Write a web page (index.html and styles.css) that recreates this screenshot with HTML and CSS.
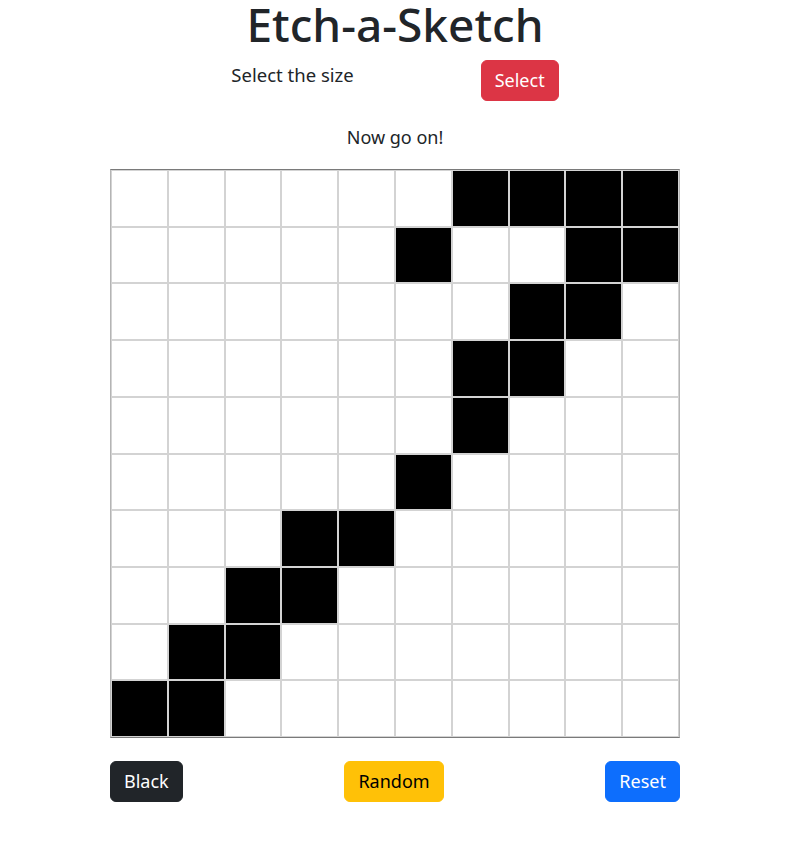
FILE: index.html
```html
<!DOCTYPE html>
<html lang="en">
<head>
<meta charset="utf-8">
<title>Etch-a-Sketch</title>
<link rel="stylesheet" href="styles.css">
</head>
<body>
<main class="page">
  <h1 class="title">Etch-a-Sketch</h1>
  <div class="size-row">
    <span class="size-label">Select the size</span>
    <button class="btn btn-danger">Select</button>
  </div>
  <p class="hint">Now go on!</p>
  <div class="board">
    <div class="cell"></div><div class="cell"></div><div class="cell"></div><div class="cell"></div><div class="cell"></div><div class="cell"></div><div class="cell on"></div><div class="cell on"></div><div class="cell on"></div><div class="cell on"></div>
    <div class="cell"></div><div class="cell"></div><div class="cell"></div><div class="cell"></div><div class="cell"></div><div class="cell on"></div><div class="cell"></div><div class="cell"></div><div class="cell on"></div><div class="cell on"></div>
    <div class="cell"></div><div class="cell"></div><div class="cell"></div><div class="cell"></div><div class="cell"></div><div class="cell"></div><div class="cell"></div><div class="cell on"></div><div class="cell on"></div><div class="cell"></div>
    <div class="cell"></div><div class="cell"></div><div class="cell"></div><div class="cell"></div><div class="cell"></div><div class="cell"></div><div class="cell on"></div><div class="cell on"></div><div class="cell"></div><div class="cell"></div>
    <div class="cell"></div><div class="cell"></div><div class="cell"></div><div class="cell"></div><div class="cell"></div><div class="cell"></div><div class="cell on"></div><div class="cell"></div><div class="cell"></div><div class="cell"></div>
    <div class="cell"></div><div class="cell"></div><div class="cell"></div><div class="cell"></div><div class="cell"></div><div class="cell on"></div><div class="cell"></div><div class="cell"></div><div class="cell"></div><div class="cell"></div>
    <div class="cell"></div><div class="cell"></div><div class="cell"></div><div class="cell on"></div><div class="cell on"></div><div class="cell"></div><div class="cell"></div><div class="cell"></div><div class="cell"></div><div class="cell"></div>
    <div class="cell"></div><div class="cell"></div><div class="cell on"></div><div class="cell on"></div><div class="cell"></div><div class="cell"></div><div class="cell"></div><div class="cell"></div><div class="cell"></div><div class="cell"></div>
    <div class="cell"></div><div class="cell on"></div><div class="cell on"></div><div class="cell"></div><div class="cell"></div><div class="cell"></div><div class="cell"></div><div class="cell"></div><div class="cell"></div><div class="cell"></div>
    <div class="cell on"></div><div class="cell on"></div><div class="cell"></div><div class="cell"></div><div class="cell"></div><div class="cell"></div><div class="cell"></div><div class="cell"></div><div class="cell"></div><div class="cell"></div>
  </div>
  <div class="controls">
    <button class="btn btn-dark">Black</button>
    <button class="btn btn-warning">Random</button>
    <button class="btn btn-primary">Reset</button>
  </div>
</main>
</body>
</html>
```

FILE: styles.css
```css
* { box-sizing: border-box; }
html, body { margin: 0; padding: 0; background: #fff; }
body {
  padding-right: 18px;
  font-family: "Noto Sans", "Open Sans", sans-serif;
  color: #212529;
}
.page {
  width: 570px;
  margin: 0 auto;
  display: flex;
  flex-direction: column;
  align-items: center;
}
.title {
  margin: 0 0 12px;
  font-size: 46px;
  font-weight: 500;
  line-height: 48px;
}
.size-row {
  display: flex;
  align-items: flex-start;
  gap: 127px;
  height: 41px;
}
.size-label {
  font-size: 18.5px;
  line-height: 30px;
}
.hint {
  margin: 21px 0 17px;
  font-size: 18px;
  line-height: 30px;
}
.board {
  width: 570px;
  height: 569px;
  display: grid;
  grid-template-columns: repeat(10, 1fr);
  grid-template-rows: repeat(10, 1fr);
  border-top: 1px solid #7a7a7a;
  border-bottom: 1px solid #7a7a7a;
  border-left: 1px solid #b4b4b4;
  border-right: 1px solid #b4b4b4;
}
.cell {
  border: 1px solid #d3d3d3;
  background: #fff;
}
.cell.on { background: #000; }
.controls {
  width: 570px;
  margin-top: 23px;
  display: flex;
  justify-content: space-between;
}
.btn {
  font-family: inherit;
  font-size: 18px;
  line-height: 1.5;
  padding: 6px 13px;
  border: 1px solid transparent;
  border-radius: 6px;
  cursor: pointer;
}
.btn-danger { background: #dc3545; border-color: #dc3545; color: #fff; }
.btn-dark { background: #212529; border-color: #212529; color: #fff; }
.btn-warning { background: #ffc107; border-color: #ffc107; color: #000; }
.btn-primary { background: #0d6efd; border-color: #0d6efd; color: #fff; }
```
